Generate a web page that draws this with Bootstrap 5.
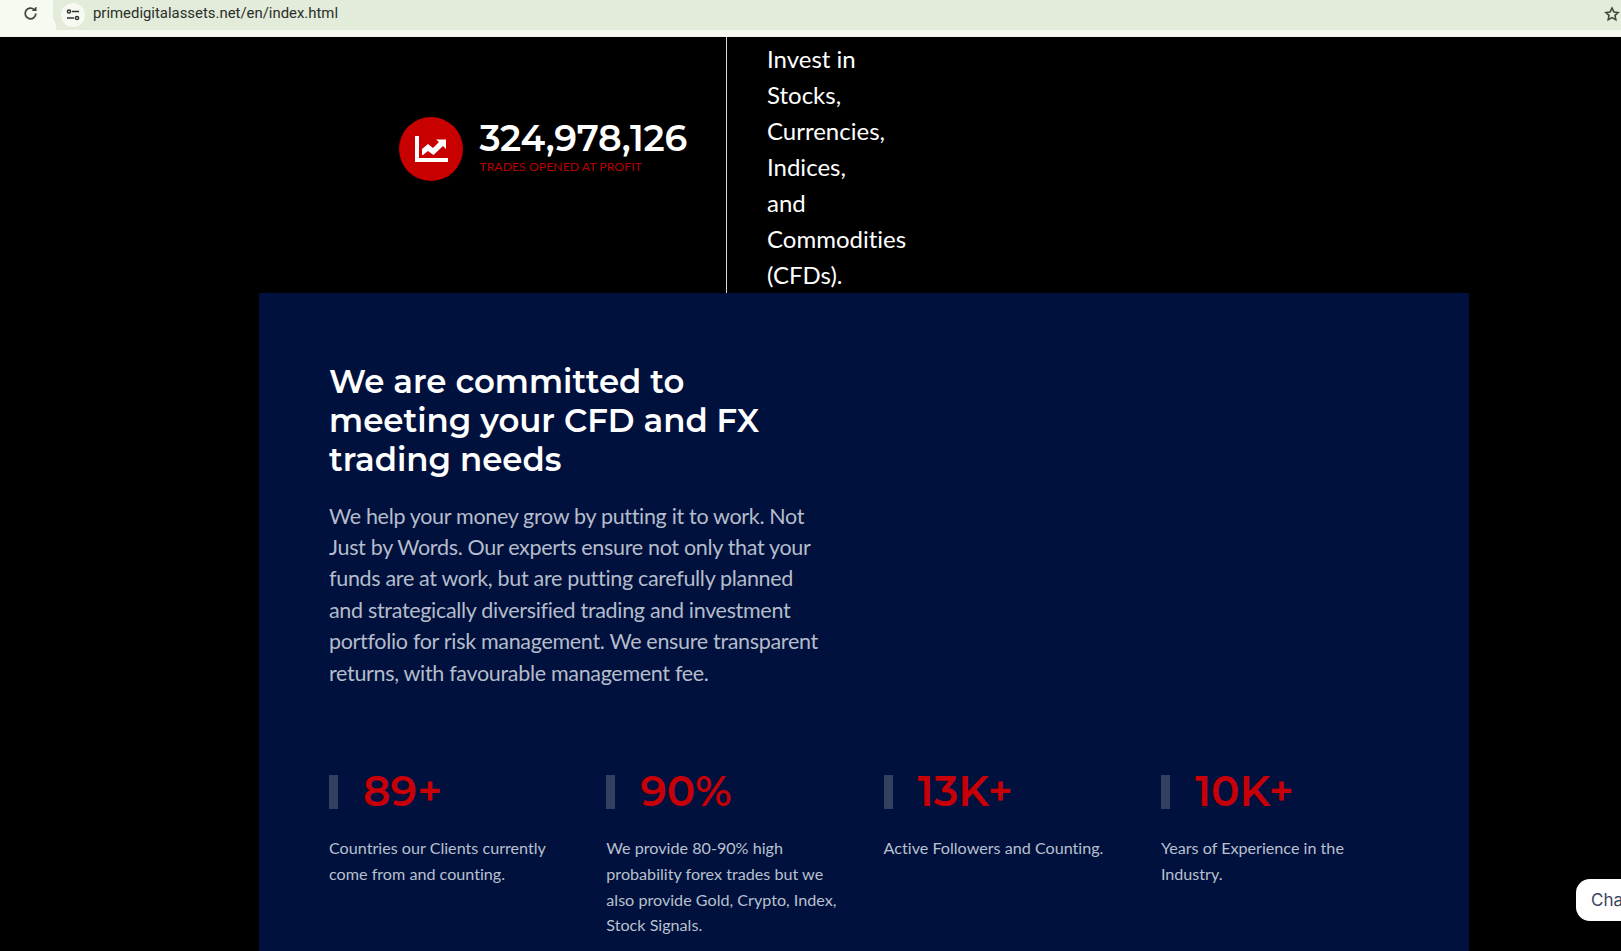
<!DOCTYPE html>
<html lang="en"><head><meta charset="utf-8"><title>Prime Digital Assets</title>
<link href="https://cdn.jsdelivr.net/npm/bootstrap@5.3.0/dist/css/bootstrap.min.css" rel="stylesheet">
<style>
html,body{height:951px;overflow:hidden;background:#000;font-family:"Lato",sans-serif}
.chrome-bar{height:37px;background:#f6faf0;border-bottom:1px solid #f0f4e8;padding-bottom:6px}
.chrome-inner{height:30px;padding-left:22px;background:linear-gradient(90deg,#f6faf0 0,#f6faf0 56px,#e3ebda 56px)}
.reload-ic{margin-top:-3px}
.url-pill{height:30px;border-radius:0 0 0 15px;padding-left:8px;padding-right:0;background:#e3ebda;margin-left:14px}
.tune-ic{width:24px;height:24px;border-radius:50%;background:#f6faf0}
.url-txt{font-family:"Roboto",sans-serif;font-size:14.9px;color:#2a2f2a;margin-left:8px;line-height:27px;height:30px}
.star-ic{margin-left:auto;margin-right:1px;margin-top:-3px}
.top-band{height:256px}
.counter-col{width:727px;border-right:1px solid #d9d9d9;padding-right:39px;padding-bottom:32px}
.profit-ic{width:64px;height:64px;background:#c80000;margin-right:16px}
.count-block{margin-top:-6px}
.count-num{font-family:"Montserrat","Inter",sans-serif;font-weight:600;font-size:36.3px;line-height:40px;color:#fff;letter-spacing:-.2px}
.count-lab{font-size:12.3px;line-height:14px;color:#b80000;margin-top:2px}
.invest-txt{width:150px;margin-left:40px;margin-top:4px;font-size:24px;line-height:36px;color:#fff;font-variant-ligatures:none}
.navy-panel{width:1210px;margin-left:259px;height:658px;background:#00113d;padding:70px 70px 0}
.lead-col{width:500px}
.commit-h{font-family:"Montserrat","Inter",sans-serif;font-weight:600;font-size:32.4px;line-height:39px;color:#fff;margin:-1px 0 22px}
.commit-p{font-size:21.5px;line-height:31.4px;color:#b5bccb;margin:-.4px 0 0;letter-spacing:-.32px;font-variant-ligatures:none}
.stats-row{margin-top:85px}
.stat-col{flex:0 0 277.3px;padding-right:42px}
.stat-head{height:35px;margin-bottom:26px}
.stat-tick{width:9px;height:34px;background:#33405f;margin-right:25px}
.stat-num{font-family:"Montserrat","Inter",sans-serif;font-weight:600;font-size:42.3px;line-height:35px;color:#c70008}
.stat-txt{font-size:16.15px;line-height:25.8px;color:#b9c0cf;margin:0;font-variant-ligatures:none}
.chat-pill{position:fixed;left:1576px;top:879px;width:80px;height:42px;background:#fff;border-radius:14px;font-family:"Inter",sans-serif;font-size:17px;color:#3a4560;padding:9px 15px;line-height:24px;white-space:nowrap;overflow:hidden}
</style></head><body>
<div class="chrome-bar">
 <div class="chrome-inner d-flex align-items-center">
  <svg class="reload-ic" width="17" height="17" viewBox="0 0 16 16" fill="none" stroke="#3f4a3f" stroke-width="1.700"><path d="M13 8a5 5 0 1 1-1.600-3.700"/><path d="M13.200 1.800v3.400H9.800" fill="#3f4a3f" stroke-width="1"/></svg>
  <div class="url-pill flex-grow-1 d-flex align-items-center">
   <span class="tune-ic d-flex align-items-center justify-content-center">
    <svg width="14" height="12" viewBox="0 0 14 12" fill="none" stroke="#333" stroke-width="1.500"><circle cx="3" cy="2.500" r="1.600"/><path d="M6 2.500h7M1 9h7"/><circle cx="11" cy="9" r="1.600"/></svg>
   </span>
   <span class="url-txt">primedigitalassets.net/en/index.html</span>
   <svg class="star-ic" width="16" height="16" viewBox="0 0 24 24" fill="none" stroke="#3f4a3f" stroke-width="2.400"><path d="M12 3l2.800 5.900 6.400.8-4.700 4.400 1.200 6.400L12 17.400l-5.700 3.100 1.200-6.400-4.700-4.400 6.400-.8z"/></svg>
  </div>
 </div>
</div>
<div class="top-band d-flex">
 <div class="counter-col d-flex align-items-center justify-content-end">
  <div class="profit-ic rounded-circle d-flex align-items-center justify-content-center">
   <svg width="33" height="26" viewBox="0 0 33 26" fill="#fff"><path d="M0 0h4v22h29v4H0z"/><path d="M7 13l6-5 5 4 6-6-3-2.500h10V13l-3-3-9.500 9-5.500-4-5 4H7z"/></svg>
  </div>
  <div class="count-block"><div class="count-num">324,978,126</div><div class="count-lab">TRADES OPENED AT PROFIT</div></div>
 </div>
 <div class="invest-txt">Invest in<br>Stocks,<br>Currencies,<br>Indices,<br>and<br>Commodities<br>(CFDs).</div>
</div>
<div class="navy-panel">
 <div class="lead-col">
  <h2 class="commit-h">We are committed to meeting your CFD and FX trading needs</h2>
  <p class="commit-p">We help your money grow by putting it to work. Not Just by Words. Our experts ensure not only that your funds are at work, but are putting carefully planned and strategically diversified trading and investment portfolio for risk management. We ensure transparent returns, with favourable management fee.</p>
 </div>
 <div class="stats-row d-flex">
  <div class="stat-col"><div class="stat-head d-flex align-items-center"><span class="stat-tick"></span><span class="stat-num">89+</span></div><p class="stat-txt">Countries our Clients currently come from and counting.</p></div>
  <div class="stat-col"><div class="stat-head d-flex align-items-center"><span class="stat-tick"></span><span class="stat-num">90%</span></div><p class="stat-txt">We provide 80-90% high probability forex trades but we also provide Gold, Crypto, Index, Stock Signals.</p></div>
  <div class="stat-col"><div class="stat-head d-flex align-items-center"><span class="stat-tick"></span><span class="stat-num">13K+</span></div><p class="stat-txt">Active Followers and Counting.</p></div>
  <div class="stat-col"><div class="stat-head d-flex align-items-center"><span class="stat-tick"></span><span class="stat-num">10K+</span></div><p class="stat-txt">Years of Experience in the Industry.</p></div>
 </div>
</div>
<div class="chat-pill">Chat</div>
</body></html>
